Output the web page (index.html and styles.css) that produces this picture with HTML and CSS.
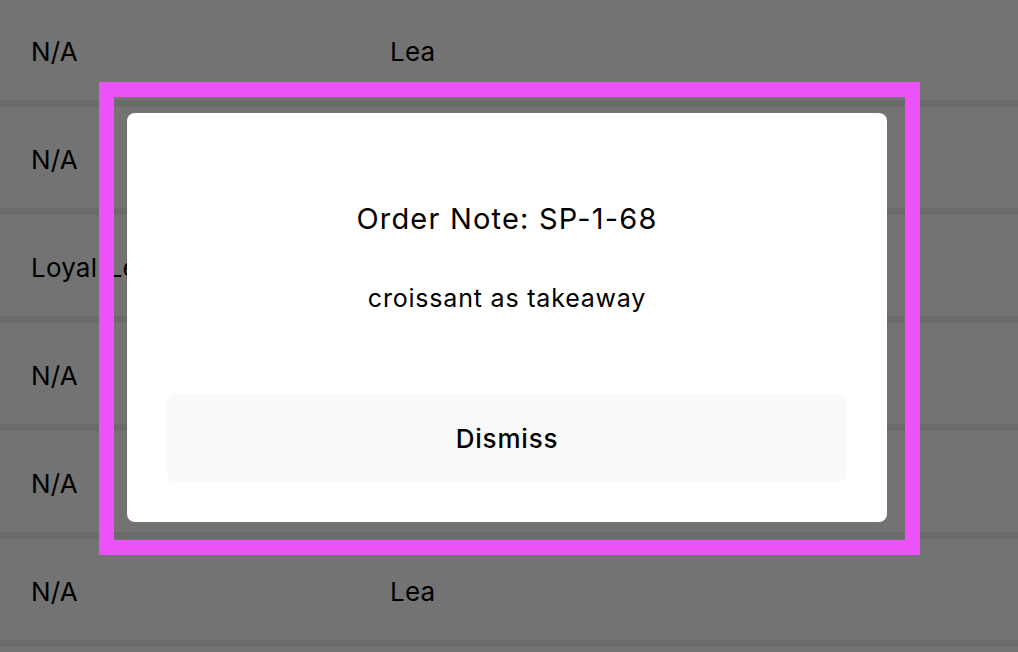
FILE: index.html
```html
<!DOCTYPE html>
<html lang="en">
<head>
<meta charset="utf-8">
<title>Order Note</title>
<link rel="stylesheet" href="styles.css">
</head>
<body>
<div class="list">
  <div class="row"><span class="col1">N/A</span><span class="col2">Lea</span></div>
  <div class="row"><span class="col1">N/A</span><span class="col2">Lea</span></div>
  <div class="row"><span class="col1">Loyal Lea</span><span class="col2">Lea</span></div>
  <div class="row"><span class="col1">N/A</span><span class="col2">Lea</span></div>
  <div class="row"><span class="col1">N/A</span><span class="col2">Lea</span></div>
  <div class="row"><span class="col1">N/A</span><span class="col2">Lea</span></div>
  <div class="row"></div>
</div>
<div class="overlay">
  <div class="highlight">
    <div class="modal">
      <h2 class="title">Order Note: SP-1-68</h2>
      <p class="note">croissant as takeaway</p>
      <button class="dismiss" type="button">Dismiss</button>
    </div>
  </div>
</div>
</body>
</html>
```

FILE: styles.css
```css
html, body {
  margin: 0;
  padding: 0;
  height: 100%;
  overflow: hidden;
  font-family: Inter, "Liberation Sans", sans-serif;
  background: #eeeeee;
}

.list {
  display: flex;
  flex-direction: column;
  gap: 7px;
  margin-top: -1px;
}

.row {
  box-sizing: border-box;
  height: 101px;
  flex-shrink: 0;
  background: #ffffff;
  display: flex;
  align-items: center;
  padding: 3px 0 0 31px;
  font-size: 26px;
  letter-spacing: 0.2px;
  color: #000;
}

.col1 {
  width: 359px;
  white-space: nowrap;
  word-spacing: 3px;
}

.overlay {
  position: fixed;
  inset: 0;
  background: rgba(0, 0, 0, 0.55);
  display: flex;
  justify-content: center;
  align-items: flex-start;
  padding-top: 82px;
  padding-left: 1px;
}

.highlight {
  border: 15px solid #eb52f7;
  padding: 16px 18px 18px 13px;
}

.modal {
  width: 680px;
  height: 329px;
  padding: 40px;
  background: #ffffff;
  border-radius: 8px;
  display: flex;
  flex-direction: column;
  align-items: center;
}

.title {
  margin: 49px 0 0;
  font-size: 29px;
  line-height: 34px;
  letter-spacing: 1.2px;
  font-weight: 400;
  color: #000;
}

.note {
  margin: 47px 0 0;
  font-size: 25px;
  line-height: 30px;
  letter-spacing: 0.8px;
  color: #000;
}

.dismiss {
  margin-top: auto;
  width: 100%;
  height: 88px;
  border: none;
  border-radius: 8px;
  background: #f9f9f9;
  font-family: inherit;
  font-size: 26px;
  letter-spacing: 0.8px;
  font-weight: 500;
  color: #000;
}
```
